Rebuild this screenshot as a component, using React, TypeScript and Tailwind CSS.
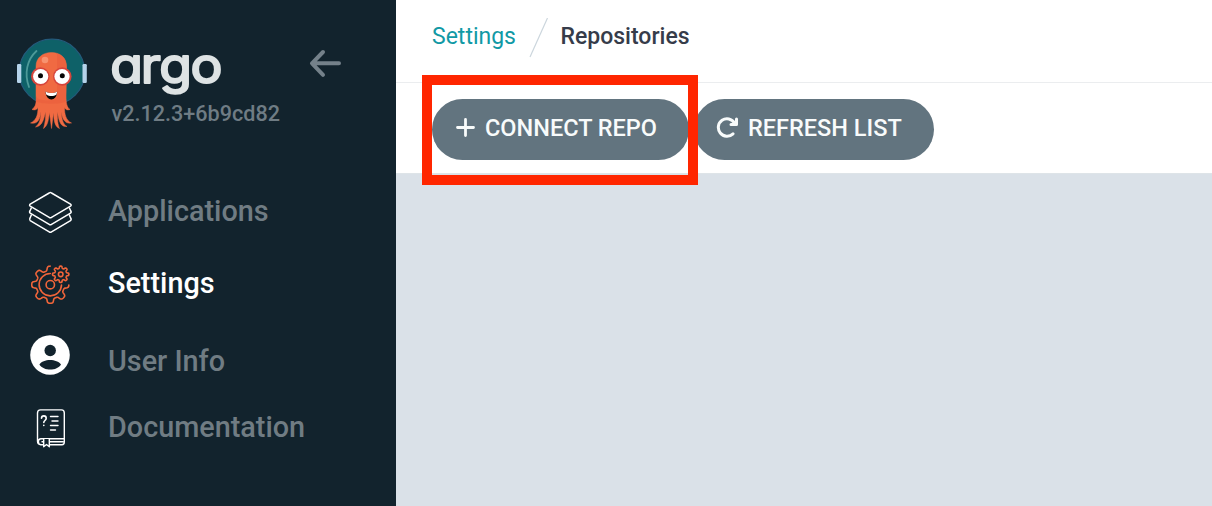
import React from "react";

const gearPath = (cx: number, cy: number, mid: number, amp: number, teeth: number, from: number, to: number) => {
  const points: string[] = [];
  for (let deg = from; deg <= to; deg += 1.5) {
    const t = (deg * Math.PI) / 180;
    const wave = Math.tanh(2.2 * Math.cos(teeth * t));
    const r = mid + amp * wave;
    points.push(`${(cx + r * Math.cos(t)).toFixed(2)} ${(cy + r * Math.sin(t)).toFixed(2)}`);
  }
  return `M${points.join("L")}`;
};

function Mascot() {
  return (
    <svg width="72" height="92" viewBox="16 37.500 72 92" className="block shrink-0">
      <circle cx="52" cy="71.5" r="32.8" fill="#0e6168" stroke="#245a7b" strokeWidth="1.2" />
      <rect x="17" y="63.500" width="4.3" height="19" rx="1.2" fill="#b5d3ea" />
      <rect x="82.5" y="63.500" width="4.3" height="19" rx="1.2" fill="#b5d3ea" />
      <path d="M36.5 50.5C27 59 24 73 29 86.5" fill="none" stroke="#4d9a99" strokeWidth="1.8" strokeLinecap="round" />
      <path
        d="M36 66C36 57 43 52 51.5 52S66.500 57 66.500 66L66 95C66 103 67 107 70 109C67 110 65.500 109 64.500 107C64.500 114 66 120 71.500 122.500C66 123.500 62 120 61.500 111C61 117 63 124 67 126C60 127 58.500 119 57.500 111C57 118 58 125 59.500 128C54 126 54 118 53.500 112L51.500 128L49.500 112C48.500 119 48 125 43.500 128C45 123 46 117 45.500 111C44 119 42 126 35.500 126.500C40 123 41 117 41 111C40 120 37 124 30.500 122.500C36 120 38 115 38 107C37 109 35 110 32 109C36 106 36.500 102 36 95Z"
        fill="#f06a42"
        stroke="#f06a42"
        strokeWidth="0.500"
      />
      <path d="M57 53C64 55 66.500 60 66.500 66L66 101C61 104 41 104 36.300 101L36 97C42 101 54 101 57 97Z" fill="#e95f3d" opacity="0.7" />
      <circle cx="45" cy="59.500" r="3.300" fill="#f7926f" />
      <circle cx="40.300" cy="76" r="9.300" fill="#d6453c" />
      <circle cx="62.300" cy="76" r="9.300" fill="#d6453c" />
      <circle cx="40.700" cy="76" r="7.600" fill="#fff" />
      <circle cx="62" cy="76" r="7.600" fill="#fff" />
      <circle cx="40.500" cy="75.200" r="2.500" fill="#050505" />
      <circle cx="62.300" cy="75.200" r="2.500" fill="#050505" />
      <path d="M45.500 91C49 93 54 93 57.200 91C56.800 101.500 46 101.500 45.500 91Z" fill="#050505" />
      <path d="M45.500 91C49 93 54 93 57.200 91L56.500 94C53.500 96 49.500 96 46.200 94Z" fill="#fff" />
    </svg>
  );
}

function LayersIcon() {
  return (
    <svg width="46" height="46" viewBox="27 190 46 46" fill="none" stroke="#fff" strokeWidth="1.500" strokeLinejoin="round" className="block">
      <path d="M49.200 193Q50.300 192.200 51.500 193L70.500 204.200Q71.800 205.200 70.500 206.200L51.500 217.400Q50.300 218.200 49.200 217.400L30.200 206.200Q29 205.200 30.200 204.200Z" />
      <path d="M31.500 207.500L30.200 210.500Q29 212.200 30.200 213.200L49.200 224.400Q50.300 225.200 51.500 224.400L70.500 213.200Q71.800 212.200 70.500 210.500L69.200 207.500" />
      <path d="M31.500 214.500L30.200 217.800Q29 219.500 30.200 220.700L49.200 231.900Q50.300 232.700 51.500 231.900L70.500 220.700Q71.800 219.500 70.500 217.800L69.200 214.500" />
    </svg>
  );
}

function GearsIcon() {
  return (
    <svg width="46" height="46" viewBox="27 262 46 46" fill="none" stroke="#f1653a" strokeWidth="1.600" strokeLinecap="round" strokeLinejoin="round" className="block">
      <path d={gearPath(50.300, 284.700, 16.300, 2.300, 8, 1, 270)} />
      <circle cx="50.300" cy="284.700" r="4.200" />
      <path d="M50.300 273.500A11.200 11.200 0 1 0 61.500 285" />
      <path d={gearPath(60.700, 274.300, 7.100, 1.100, 8, 0, 360)} />
      <circle cx="60.700" cy="274.300" r="2.300" />
    </svg>
  );
}

function UserIcon() {
  return (
    <svg width="40" height="40" viewBox="0 0 40 40" className="mb-1 block">
      <circle cx="20" cy="20" r="19.800" fill="#fff" />
      <circle cx="20.200" cy="15.500" r="5.700" fill="#12232d" />
      <path d="M9.400 29.500C13 23.500 27 23.500 31 29.500C27 36.300 13.500 36.300 9.400 29.500Z" fill="#12232d" />
    </svg>
  );
}

function DocsIcon() {
  return (
    <svg width="30" height="40" viewBox="35 409 30 40" fill="none" stroke="#fff" strokeWidth="1.400" strokeLinecap="round" strokeLinejoin="round" className="block">
      <path d="M43 444.700H41Q37.500 444.700 37.500 441V413Q37.500 409.900 40.500 409.900H61.500Q64.300 409.900 64.300 413V438.700H41C37.500 438.700 37.500 444.700 41 444.700M50 444.700H62Q64.300 444.700 64.300 442V438.700M42 441.700H63" />
      <path d="M43.700 439V446.700L46.500 444.500L49.300 446.700V439" fill="#12232d" />
      <path d="M50.500 416.500H58M52 421H58M50.500 425.500H58M50.500 430H55.500" />
      <path d="M41.500 418.300C41.500 415 46.200 415 46.200 418.300C46.200 420.500 43.800 420.500 43.800 422.500M43.800 425.300V425.500" strokeWidth="1.600" />
    </svg>
  );
}

const navItems = [
  { label: "Applications", icon: <LayersIcon />, color: "text-[#707c83]", shift: "pb-1" },
  { label: "Settings", icon: <GearsIcon />, color: "text-white", shift: "pb-1" },
  { label: "User Info", icon: <UserIcon />, color: "text-[#707c83]", shift: "pt-2" },
  { label: "Documentation", icon: <DocsIcon />, color: "text-[#707c83]", shift: "pb-1" },
];

function Sidebar() {
  return (
    <aside className="h-full w-[396px] shrink-0 bg-[#12232d]">
      <div className="flex h-[177px] pt-[38px] pl-4">
        <Mascot />
        <div className="ml-[22px] w-[200px]">
          <svg width="130" height="63" viewBox="0 0 130 63" className="block">
            <text
              x="0.300 28 44.700 73.300"
              y="45.200"
              transform="scale(1.1 1)"
              fontFamily="Inter, sans-serif"
              fontSize="48.500"
              fontWeight="400"
              fill="#dee3e4"
              stroke="#dee3e4"
              strokeWidth="2"
              strokeLinejoin="round"
              style={{ fontFeatureSettings: '"cv11"' }}
            >
              argo
            </text>
          </svg>
          <div className="ml-[1.500px] text-[21.600px] leading-[26px] font-medium whitespace-nowrap text-[#6f7c84]">v2.12.3+6b9cd82</div>
        </div>
        <svg width="34" height="30" viewBox="308 48 34 30" className="mt-[10px] -ml-[2px] block" fill="none" stroke="#74818a" strokeWidth="4" strokeLinecap="round" strokeLinejoin="round">
          <path d="M339 63.300H312M323 52L312 63.300L323 74.800" />
        </svg>
      </div>
      <nav>
        {navItems.map((item) => (
          <div key={item.label} className="flex h-[72px] items-center">
            <div className="flex w-[100px] justify-center">{item.icon}</div>
            <span className={`ml-2 text-[28.800px] leading-8 font-medium ${item.color} ${item.shift}`}>{item.label}</span>
          </div>
        ))}
      </nav>
    </aside>
  );
}

export default function App() {
  return (
    <div className="flex h-[506px] w-[1212px] overflow-hidden bg-[#dae1e8] font-[Roboto,sans-serif]">
      <Sidebar />
      <main className="flex-1">
        <header className="flex h-[83px] border-b border-[#ebedef] bg-white pt-[18px] pl-9 text-[23px] leading-[38px]">
          <span className="w-[97px] text-[#1199a5]">Settings</span>
          <svg width="20" height="40" viewBox="0 0 20 40" className="block">
            <path d="M18.500 0L1 39" stroke="#ccd6dd" strokeWidth="1.200" />
          </svg>
          <span className="ml-[11.500px] font-medium text-[#363c4a]">Repositories</span>
        </header>
        <section className="relative flex h-[91px] gap-[5px] border-b border-[#dee4e8] bg-white pt-4 pl-9 text-[23.500px] font-medium text-[#f8fbfb]">
          <button className="flex h-[61px] w-[257px] items-center rounded-full bg-[#62747f] pb-[3px] pl-6">
            <svg width="20" height="20" viewBox="0.500 0.500 20 20" stroke="currentColor" strokeWidth="2.800" strokeLinecap="round">
              <path d="M10 2V18M2 10H18" />
            </svg>
            <span className="ml-[9px] pt-0.5 whitespace-nowrap">CONNECT REPO</span>
          </button>
          <button className="flex h-[61px] w-[240px] items-center rounded-full bg-[#62747f] pb-[3px] pl-[22px]">
            <svg width="23" height="22" viewBox="0 2 23 22" fill="none" stroke="currentColor" strokeWidth="3" strokeLinecap="round" strokeLinejoin="round">
              <path d="M18.500 8A8.700 8.700 0 1 0 17 18.800M20.500 4V9.500H15" />
            </svg>
            <span className="ml-[9px] pt-0.5 whitespace-nowrap">REFRESH LIST</span>
          </button>
          <div className="absolute top-[-8px] left-[26px] h-[110px] w-[276px] border-10 border-[#ff2600]" />
        </section>
      </main>
    </div>
  );
}
